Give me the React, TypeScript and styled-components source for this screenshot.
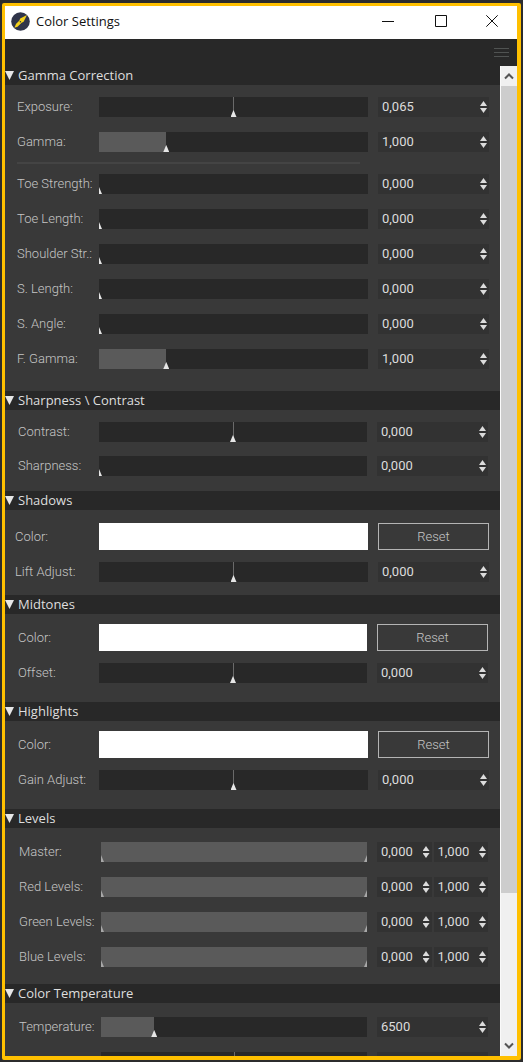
import React, { useId, useState } from "react";
import styled, { createGlobalStyle, css } from "styled-components";

const colors = {
  desktop: "#2c2c2d",
  frame: "#ffc000",
  panel: "#393939",
  dark: "#282828",
  field: "#323232",
  fill: "#5a5a5a",
  label: "#c6c6c6",
  value: "#dcdcdc",
  heading: "#dedede",
};

const GlobalStyle = createGlobalStyle`
  *, *::before, *::after { box-sizing: border-box; }
  body { margin: 0; background: ${colors.desktop}; }
  button, input { font: inherit; color: inherit; margin: 0; padding: 0; border: 0; background: none; border-radius: 0; }
`;

const Desktop = styled.div`
  height: 100vh;
  padding: 3px 2px 2px;
  background: ${colors.desktop};
  font-family: Roboto, "Liberation Sans", sans-serif;
  font-size: 13px;
  line-height: 20px;
`;

const Window = styled.main`
  display: flex;
  flex-direction: column;
  height: 100%;
  border: solid ${colors.frame};
  border-width: 3px 4px 4px 3px;
  border-radius: 2px;
  background: ${colors.dark};
  overflow: hidden;
`;

const TitleBar = styled.header`
  flex: none;
  display: flex;
  align-items: center;
  height: 33px;
  padding: 0 0 3px 6px;
  background: #fff;
  color: #111;
`;

const Title = styled.h1`
  flex: 1;
  margin: 0 0 0 6px;
  font: 400 13px/20px "Open Sans", sans-serif;
`;

const WindowButton = styled.button`
  display: flex;
  align-items: center;
  justify-content: center;
  width: 53px;
  height: 30px;
  &:last-child { width: 50px; }
`;

const MenuBar = styled.div`
  flex: none;
  display: flex;
  justify-content: flex-end;
  height: 27px;
  padding: 0 8px;
`;

const MenuButton = styled.button`
  display: flex;
  align-items: center;
`;

const Viewport = styled.div`
  flex: 1;
  min-height: 0;
  display: flex;
`;

const Sections = styled.div`
  flex: 1;
  min-width: 0;
  overflow: hidden;
  background: ${colors.panel};
`;

const SectionHeading = styled.h2`
  margin: 0;
  background: ${colors.dark};
  color: ${colors.heading};
  font: 400 13px/19px "Open Sans", sans-serif;
`;

const SectionToggle = styled.button`
  display: flex;
  align-items: center;
  gap: 4px;
  width: 100%;
  height: 19px;
  text-align: left;
`;

const SectionBody = styled.div<{ $top: number; $gap: number; $bottom: number }>`
  display: flex;
  flex-direction: column;
  gap: ${(p) => p.$gap}px;
  padding: ${(p) => p.$top}px 0 ${(p) => p.$bottom}px;
`;

const RowGrid = styled.div<{ $indent: number; $track: number; $end: number }>`
  display: grid;
  grid-template-columns: ${(p) => p.$track - p.$indent}px minmax(0, 1fr) 111px;
  align-items: center;
  padding: 0 ${(p) => p.$end}px 0 ${(p) => p.$indent}px;
`;

const Label = styled.label`
  color: ${colors.label};
  font-weight: 300;
  white-space: nowrap;
`;

const Divider = styled.hr`
  width: 343px;
  max-width: 80%;
  height: 2px;
  margin: -5px 0 -5px 12px;
  border: 0;
  background: #444;
`;

const Track = styled.div<{ $fill: number; $center?: boolean }>`
  position: relative;
  height: 20px;
  margin-right: 10px;
  overflow: hidden;
  background:
    ${(p) => p.$center && "linear-gradient(#6a6a6a, #6a6a6a) center / 1px 100% no-repeat,"}
    linear-gradient(${colors.fill}, ${colors.fill}) left / ${(p) => p.$fill}% 100% no-repeat,
    ${colors.dark};
`;

const thumb = css<{ $muted?: boolean }>`
  appearance: none;
  width: 6px;
  height: 20px;
  border: 0;
  border-radius: 0;
  background: ${(p) => (p.$muted ? "#a8a8a8" : "#e6e6e6")};
  clip-path: polygon(50% 13px, 100% 100%, 0 100%);
  pointer-events: auto;
`;

const Range = styled.input<{ $muted?: boolean }>`
  appearance: none;
  position: absolute;
  top: 0;
  left: -3px;
  width: calc(100% + 6px);
  height: 20px;
  pointer-events: ${(p) => (p.$muted ? "none" : "auto")};
  &::-webkit-slider-thumb { ${thumb} }
  &::-moz-range-thumb { ${thumb} }
`;

const Swatch = styled.input`
  appearance: none;
  display: block;
  width: calc(100% - 10px);
  height: 27px;
  background: #fff;
  &::-webkit-color-swatch-wrapper { padding: 0; }
  &::-webkit-color-swatch { border: 0; border-radius: 0; }
`;

const ResetButton = styled.button`
  height: 27px;
  border: 1px solid #b4b4b4;
  color: ${colors.label};
  font-weight: 300;
  text-align: center;
`;

const Fields = styled.div`
  display: flex;
  gap: 2px;
`;

const FieldBox = styled.div`
  flex: 1;
  min-width: 0;
  display: flex;
  align-items: center;
  height: 20px;
  padding: 0 2px 0 4px;
  background: ${colors.field};
`;

const FieldInput = styled.input`
  flex: 1;
  width: 0;
  height: 20px;
  color: ${colors.value};
`;

const Steppers = styled.div`
  display: flex;
  flex-direction: column;
  gap: 2px;
`;

const Stepper = styled.button`
  display: block;
  width: 7px;
  height: 5px;
  background: #dcdcdc;
  clip-path: polygon(50% 0, 100% 100%, 0 100%);
  &:last-child { clip-path: polygon(0 0, 100% 0, 50% 100%); }
`;

const ScrollBar = styled.div`
  flex: none;
  display: flex;
  flex-direction: column;
  width: 17px;
  border-left: 1px solid #fafafa;
  background: #f0f0f0;
`;

const ScrollButton = styled.button`
  flex: none;
  display: flex;
  align-items: center;
  justify-content: center;
  height: 20px;
`;

const ScrollThumb = styled.div`
  flex: 807;
  background: #cdcdcd;
`;

const ScrollRest = styled.div`
  flex: 143;
`;

type SliderRow = { kind: "slider"; label: string; value: string; position: number; center?: boolean };
type ColorRow = { kind: "color"; label: string };
type LevelRow = { kind: "levels"; label: string };
type DividerRow = { kind: "divider" };
type Row = SliderRow | ColorRow | LevelRow | DividerRow;

type Layout = { top: number; gap: number; bottom: number; indent: number; track: number; end: number };
type SectionData = { title: string; layout: Layout; rows: Row[] };

const slider = (label: string, value: string, position: number): SliderRow => ({
  kind: "slider",
  label,
  value,
  position,
  center: position === 50,
});

const sections: SectionData[] = [
  {
    title: "Gamma Correction",
    layout: { top: 12, gap: 15, bottom: 22, indent: 12, track: 94, end: 11 },
    rows: [
      slider("Exposure:", "0,065", 50),
      slider("Gamma:", "1,000", 25),
      { kind: "divider" },
      slider("Toe Strength:", "0,000", 0),
      slider("Toe Length:", "0,000", 0),
      slider("Shoulder Str.:", "0,000", 0),
      slider("S. Length:", "0,000", 0),
      slider("S. Angle:", "0,000", 0),
      slider("F. Gamma:", "1,000", 25),
    ],
  },
  {
    title: "Sharpness \\ Contrast",
    layout: { top: 12, gap: 14, bottom: 15, indent: 13, track: 94, end: 12 },
    rows: [slider("Contrast:", "0,000", 50), slider("Sharpness:", "0,000", 0)],
  },
  {
    title: "Shadows",
    layout: { top: 13, gap: 12, bottom: 13, indent: 10, track: 94, end: 11 },
    rows: [{ kind: "color", label: "Color:" }, slider("Lift Adjust:", "0,000", 50)],
  },
  {
    title: "Midtones",
    layout: { top: 10, gap: 12, bottom: 19, indent: 13, track: 94, end: 12 },
    rows: [{ kind: "color", label: "Color:" }, slider("Offset:", "0,000", 50)],
  },
  {
    title: "Highlights",
    layout: { top: 10, gap: 12, bottom: 19, indent: 13, track: 94, end: 11 },
    rows: [{ kind: "color", label: "Color:" }, slider("Gain Adjust:", "0,000", 50)],
  },
  {
    title: "Levels",
    layout: { top: 14, gap: 15, bottom: 17, indent: 14, track: 96, end: 12 },
    rows: [
      { kind: "levels", label: "Master:" },
      { kind: "levels", label: "Red Levels:" },
      { kind: "levels", label: "Green Levels:" },
      { kind: "levels", label: "Blue Levels:" },
    ],
  },
  {
    title: "Color Temperature",
    layout: { top: 14, gap: 15, bottom: 20, indent: 14, track: 96, end: 12 },
    rows: [slider("Temperature:", "6500", 20), slider("Tint:", "0,000", 50)],
  },
];

function NumberField({ id, name, initial }: { id?: string; name: string; initial: string }) {
  const [value, setValue] = useState(initial);
  const step = (direction: number) => {
    const decimals = value.includes(",") ? 3 : 0;
    const next = parseFloat(value.replace(",", ".")) + direction * (decimals ? 0.005 : 100);
    setValue(next.toFixed(decimals).replace(".", ","));
  };
  return (
    <FieldBox>
      <FieldInput id={id} aria-label={name} inputMode="decimal" value={value} onChange={(e) => setValue(e.target.value)} />
      <Steppers>
        <Stepper type="button" aria-label={`Increase ${name}`} onClick={() => step(1)} />
        <Stepper type="button" aria-label={`Decrease ${name}`} onClick={() => step(-1)} />
      </Steppers>
    </FieldBox>
  );
}

function SettingRow({ row, layout }: { row: Row; layout: Layout }) {
  const id = useId();
  const [position, setPosition] = useState(row.kind === "slider" ? row.position : 0);
  const [upper, setUpper] = useState(100);
  const [color, setColor] = useState("#ffffff");
  if (row.kind === "divider") return <Divider />;

  const name = row.label.replace(":", "");
  return (
    <RowGrid $indent={layout.indent} $track={layout.track} $end={layout.end}>
      <Label htmlFor={id}>{row.label}</Label>
      {row.kind === "slider" && (
        <>
          <Track $fill={row.center ? 0 : position} $center={row.center}>
            <Range id={id} type="range" value={position} onChange={(e) => setPosition(+e.target.value)} />
          </Track>
          <NumberField name={name} initial={row.value} />
        </>
      )}
      {row.kind === "color" && (
        <>
          <Swatch id={id} type="color" value={color} onChange={(e) => setColor(e.target.value)} />
          <ResetButton type="button" onClick={() => setColor("#ffffff")}>Reset</ResetButton>
        </>
      )}
      {row.kind === "levels" && (
        <>
          <Track $fill={100}>
            <Range $muted id={id} type="range" value={position} onChange={(e) => setPosition(+e.target.value)} />
            <Range $muted aria-label={`${name} upper`} type="range" value={upper} onChange={(e) => setUpper(+e.target.value)} />
          </Track>
          <Fields>
            <NumberField name={`${name} minimum`} initial="0,000" />
            <NumberField name={`${name} maximum`} initial="1,000" />
          </Fields>
        </>
      )}
    </RowGrid>
  );
}

function Section({ title, layout, rows }: SectionData) {
  const [open, setOpen] = useState(true);
  return (
    <section>
      <SectionHeading>
        <SectionToggle type="button" aria-expanded={open} onClick={() => setOpen(!open)}>
          <svg width="9" height="9" viewBox="0 0 9 9" aria-hidden="true">
            <path d={open ? "M0 0h9L4.500 9z" : "M0 0v9l9-4.500z"} fill="#e6e6e6" />
          </svg>
          {title}
        </SectionToggle>
      </SectionHeading>
      {open && (
        <SectionBody $top={layout.top} $gap={layout.gap} $bottom={layout.bottom}>
          {rows.map((row, i) => (
            <SettingRow key={i} row={row} layout={layout} />
          ))}
        </SectionBody>
      )}
    </section>
  );
}

function AppLogo() {
  return (
    <svg width="19" height="19" viewBox="0 0 19 19" aria-hidden="true">
      <circle cx="9.500" cy="9.500" r="9.300" fill="#30354a" />
      <path d="M16 3 12.600 9.800 10.600 10.800 6.500 14.800 3.400 15.800 5 12 8.400 8.600 9.200 6.400z" fill="#f5d21c" />
      <circle cx="9.400" cy="9.800" r="0.800" fill="#30354a" />
    </svg>
  );
}

export default function App() {
  return (
    <>
      <GlobalStyle />
      <Desktop>
        <Window>
          <TitleBar>
            <AppLogo />
            <Title>Color Settings</Title>
            <WindowButton type="button" aria-label="Minimize">
              <svg width="12" height="12" viewBox="0 0 12 12" stroke="#111"><path d="M0 6.500h12" /></svg>
            </WindowButton>
            <WindowButton type="button" aria-label="Maximize">
              <svg width="12" height="12" viewBox="0 0 12 12" stroke="#111" fill="none"><path d="M.5.5h11v11H.5z" /></svg>
            </WindowButton>
            <WindowButton type="button" aria-label="Close">
              <svg width="12" height="12" viewBox="0 0 12 12" stroke="#111"><path d="m.3.3 11.400 11.400M11.700.3.300 11.700" /></svg>
            </WindowButton>
          </TitleBar>
          <MenuBar>
            <MenuButton type="button" aria-label="Menu">
              <svg width="15" height="9" viewBox="0 0 15 9" stroke="#505352"><path d="M0 .5h15M0 4.500h15M0 8.500h15" /></svg>
            </MenuButton>
          </MenuBar>
          <Viewport>
            <Sections>
              {sections.map((section) => (
                <Section key={section.title} {...section} />
              ))}
            </Sections>
            <ScrollBar>
              <ScrollButton type="button" aria-label="Scroll up">
                <svg width="10" height="8" viewBox="0 0 10 8" fill="none" stroke="#555" strokeWidth="2"><path d="m1 6.500 4-4 4 4" /></svg>
              </ScrollButton>
              <ScrollThumb />
              <ScrollRest />
              <ScrollButton type="button" aria-label="Scroll down">
                <svg width="10" height="8" viewBox="0 0 10 8" fill="none" stroke="#555" strokeWidth="2"><path d="m1 1.500 4 4 4-4" /></svg>
              </ScrollButton>
            </ScrollBar>
          </Viewport>
        </Window>
      </Desktop>
    </>
  );
}
